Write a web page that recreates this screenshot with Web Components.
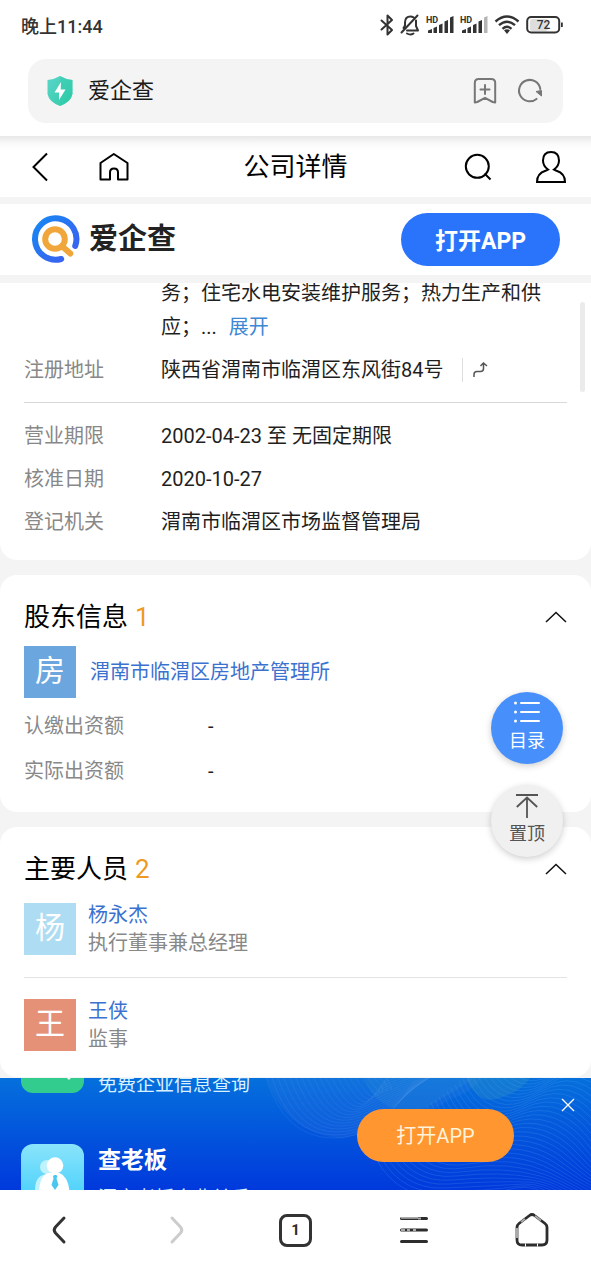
<!DOCTYPE html>
<html lang="zh-CN">
<head>
<meta charset="utf-8">
<meta name="viewport" content="width=device-width, initial-scale=1">
<title>公司详情</title>
<style>
  body { margin: 0; background: #f4f4f4; font-family: Roboto, "Noto Sans CJK SC", sans-serif; font-size: 20px; color: #1f1f1f; }
</style>
</head>
<body>
<company-page></company-page>

<script>
const ICONS = {
  bluetooth: [14, 22, '<path d="M1.5 6.500 12 16 7.500 20.500V1.500L12 6 1.500 15.500" fill="none" stroke="#333" stroke-width="2" stroke-linejoin="round" stroke-linecap="round"/>'],
  mute: [20, 22, '<g fill="none" stroke="#333" stroke-width="2" stroke-linecap="round" stroke-linejoin="round"><path d="M16 6.500V12l2 4.500H7M3.500 14 5 11.500V8.500C5 4.500 7.500 2.500 10.500 2.500q1.500 0 3 .8M1.500 18.500 17.500 1.500M7 19.500q3.500 2 6.500 0"/></g>'],
  signal: [28, 22, '<g fill="#333"><path d="M2 16.500 6 15v4H2zM7.500 14l3.500-1.500V19H7.500zM13 11l3.500-1.500V19H13zM18.500 7.500 22 6v13h-3.500z"/><path d="M24 3.500 27.500 2v17H24z"/></g><text x="0" y="9" font-family="Roboto" font-size="9" font-weight="700" fill="#333">HD</text>'],
  signalWeak: [28, 22, '<g fill="#333"><path d="M2 16.500 6 15v4H2zM7.500 14l3.500-1.500V19H7.500zM13 11l3.500-1.500V19H13zM18.500 7.500 22 6v13h-3.500z"/><path fill="#b5b5b5" d="M24 3.500 27.500 2v17H24z"/></g><text x="0" y="9" font-family="Roboto" font-size="9" font-weight="700" fill="#333">HD</text>'],
  wifi: [26, 22, '<g fill="none" stroke="#333" stroke-width="2.400"><path d="M1.500 7.500q11.500-10 23 0M5 11.200q8-7 16 0M8.500 14.800q4.500-4 9 0"/></g><path d="M10 16.300q3-2.300 6 0L13 20z" fill="#333"/>'],
  battery: [38, 20, '<rect x="4" y="4" width="18" height="12" rx="2" fill="#ddd"/><rect x="1.200" y="2" width="32" height="15.500" rx="4" fill="none" stroke="#333" stroke-width="2"/><path d="M35 7.500h1.800v4.500H35z" fill="#333"/><text x="17.500" y="14" text-anchor="middle" font-family="Roboto" font-size="12" font-weight="500" fill="#333">72</text>'],
  shield: [28, 32, '<defs><linearGradient id="g" x1="0" y1="0" x2="1" y2="1"><stop offset="0" stop-color="#5bd5ca"/><stop offset="1" stop-color="#2fcba4"/></linearGradient></defs><path d="M14 1q-6 3.500-12.500 4V19q1.500 8 12.500 12 11-4 12.500-12V5Q20 4.500 14 1z" fill="url(#g)"/><path d="M14 1v30q11-4 12.500-12V5Q20 4.500 14 1z" fill="#27c9a9" opacity=".3"/><path d="M15 7 8.500 17.500H13L13 25l6.500-10.500h-4.800z" fill="#fff"/>'],
  bookmark: [24, 28, '<g fill="none" stroke="#777" stroke-width="2" stroke-linejoin="round" stroke-linecap="round"><path d="M1.800 25.500V6q0-4 4-4h12.400q4 0 4 4v19.500l-2.500-.5-7.700-4.200L4.300 25zM12 8v9M7.500 12.500h9"/></g>'],
  reload: [26, 26, '<path d="M19.500 20.900A10.700 10.700 0 1 1 23.300 11" fill="none" stroke="#777" stroke-width="2" stroke-linecap="round"/><path d="m19 13.500 5.500-1v5.500z" fill="#777" stroke="#777" stroke-linejoin="round"/>'],
  back: [18, 30, '<path d="M16 1.500 2.500 15 16 28.500" fill="none" stroke="#000" stroke-width="2"/>'],
  house: [30, 30, '<path d="M1.500 27.500V11L14.800 2 28.500 11V27.500H19V20.500q0-4-4-4t-4 4V27.500z" fill="none" stroke="#000" stroke-width="2" stroke-linejoin="round"/>'],
  search: [28, 28, '<circle cx="13.300" cy="13.300" r="11.500" fill="none" stroke="#000" stroke-width="2"/><path d="m20.500 20.500 6 6" stroke="#000" stroke-width="2"/>'],
  user: [32, 34, '<path d="M2 32q0-8.500 8.500-11.200l2.500-1.300Q8 16 8 10.500 8 2 16 2t8 8.500q0 5.500-5 9l2.500 1.300Q30 23.500 30 32z" fill="none" stroke="#000" stroke-width="2"/>'],
  brand: [50, 50, '<defs><linearGradient id="b" x1="0" y1="0" x2="1" y2="1"><stop offset="0" stop-color="#1688f2"/><stop offset="1" stop-color="#3f5cf0"/></linearGradient></defs><path d="M30.200 44A20.700 20.700 0 1 1 44.200 31" fill="none" stroke="url(#b)" stroke-width="6" stroke-linecap="round"/><circle cx="24" cy="24" r="9.800" fill="none" stroke="#f0a63a" stroke-width="6"/><path d="m32 32 7.300 6.500" stroke="#f0a63a" stroke-width="6" stroke-linecap="round"/>'],
  route: [18, 18, '<path d="M2 16v-2.500q0-3 3-3h3.500q3 0 3-3V2.500M8.500 5l3-3L15 5" fill="none" stroke="#555" stroke-width="1.500"/>'],
  chevron: [22, 12, '<path d="M1 11 11 1.500 21 11" fill="none" stroke="#111" stroke-width="1.500"/>'],
  list: [28, 24, '<g stroke="#fff" stroke-width="2" stroke-linecap="round"><path d="M8 3h18M8 12h18M8 21h18"/></g><g fill="#fff"><circle cx="2.500" cy="3" r="1.500"/><circle cx="2.500" cy="12" r="1.500"/><circle cx="2.500" cy="21" r="1.500"/></g>'],
  top: [24, 26, '<path d="M1 2h22M12 25V4.500M1.800 14 12 4.500 22.200 14" fill="none" stroke="#555" stroke-width="1.800"/>'],
  close: [14, 14, '<path d="m1 1 12 12M13 1 1 13" stroke="#fff" stroke-width="1.300"/>'],
  boss: [63, 63, '<defs><linearGradient id="c" x1="0" y1="0" x2="0" y2="1"><stop offset="0" stop-color="#8ae4fb"/><stop offset="1" stop-color="#3fcdfb"/></linearGradient></defs><rect width="63" height="63" rx="12" fill="url(#c)"/><g fill="#c0f2fe"><circle cx="26" cy="23" r="7"/><path d="M14 46q0-15 12-16v16z"/></g><g fill="#fff"><circle cx="34" cy="21.500" r="8.300"/><path d="M17.500 56q0-25 10-27h11q10.500 4 10.500 27z"/></g><path d="m32 32 1.500-1h1.500l1.500 1-1 2.500 2 6.500-3.500 5-3.500-5 2-6.500z" fill="#4bc6ee"/>'],
  query: [63, 63, '<rect width="63" height="63" rx="12" fill="#32cd8e"/><circle cx="31" cy="26" r="14" fill="none" stroke="#fff" stroke-width="5"/><path d="m42 40 6 8" stroke="#fff" stroke-width="3" stroke-linecap="round"/>'],
  prev: [14, 28, '<path d="M12 2 3.500 11q-2.600 3 0 6L12 26" fill="none" stroke="#333" stroke-width="3" stroke-linecap="round"/>'],
  next: [14, 28, '<path d="m2 2 8.500 9q2.600 3 0 6L2 26" fill="none" stroke="#ccc" stroke-width="3" stroke-linecap="round"/>'],
  menu: [30, 28, '<g stroke="#2d2d2d" stroke-width="3" stroke-linecap="round"><path d="M2.500 2.500h25M2.500 14h25M2.500 25.500h25"/></g><g stroke="#aaa" stroke-width="1.800"><path d="M2 1.800h17M2 14h4M8 14h3M14 14h3M19 2.500h3"/></g>'],
  home: [34, 36, '<path d="M14.500 3.500q2.500-2 5 0l10.500 8q2 1.500 2 4V28q0 5-5 5H7q-5 0-5-5V15.500q0-2.500 2-4z" fill="none" stroke="#2d2d2d" stroke-width="2.800"/><g fill="none" stroke="#aaa" stroke-width="2"><path d="M2 26V16M6 10l4-3M20 4l6 4.500"/><path d="M10 33h1M22 33h1" stroke="#fff" stroke-width="3"/></g>']
};

function define(name, css, html, setup) {
  const template = document.createElement('template');
  template.innerHTML = `<style>*{box-sizing:border-box}button{font:inherit;color:inherit;border:0;background:none;padding:0;margin:0;cursor:pointer}a{text-decoration:none}h1,h2,p{margin:0;font-weight:400;font-size:inherit}${css}</style>${html}`;
  customElements.define(name, class extends HTMLElement {
    constructor() {
      super();
      this.attachShadow({ mode: 'open' }).append(template.content.cloneNode(true));
    }
    connectedCallback() { if (setup) setup(this, this.shadowRoot); }
  });
}

define('ui-icon', ':host{display:block;flex:none}svg{display:block;overflow:visible}', '', (el, root) => {
  const [w, h, body] = ICONS[el.getAttribute('name')];
  root.innerHTML += `<svg width="${w}" height="${h}" viewBox="0 0 ${w} ${h}" aria-hidden="true">${body}</svg>`;
});

define('status-bar', `
  :host{display:flex;align-items:center;justify-content:space-between;height:50px;padding:0 27px 0 21px;font-size:18px;font-weight:500;color:#333}
  .icons{display:flex;align-items:center;gap:6px}`,
  `<span>晚上11:44</span>
  <div class="icons"><ui-icon name="bluetooth"></ui-icon><ui-icon name="mute"></ui-icon><ui-icon name="signal"></ui-icon><ui-icon name="signalWeak"></ui-icon><ui-icon name="wifi"></ui-icon><ui-icon name="battery"></ui-icon></div>`);

define('address-bar', `
  :host{display:flex;align-items:center;height:64px;margin:9px 28px 13px;padding:0 20px 0 18px;background:#f4f4f4;border-radius:18px}
  span{flex:1;margin-left:14px;font-size:22px;line-height:32px;color:#1a1a1a}
  button+button{margin-left:20px}`,
  `<ui-icon name="shield"></ui-icon><span>爱企查</span>
  <button aria-label="收藏"><ui-icon name="bookmark"></ui-icon></button><button aria-label="刷新"><ui-icon name="reload"></ui-icon></button>`);

define('title-bar', `
  :host{display:grid;grid-template-columns:1fr auto 1fr;align-items:center;height:61px;padding:0 24px;background:linear-gradient(#e8e8e8,#fafafa 8px,#fff 14px);color:#000}
  h1{font-size:26px;line-height:36px}
  div{display:flex;align-items:center;gap:50px;padding-left:7px}
  .end{justify-content:flex-end;gap:43px}`,
  `<div><button aria-label="返回"><ui-icon name="back"></ui-icon></button><button aria-label="首页"><ui-icon name="house"></ui-icon></button></div>
  <h1>公司详情</h1>
  <div class="end"><button aria-label="搜索"><ui-icon name="search"></ui-icon></button><button aria-label="我的"><ui-icon name="user"></ui-icon></button></div>`);

define('brand-bar', `
  :host{display:flex;align-items:center;height:71px;margin:7px 0 8px;padding:0 31px;background:#fff}
  strong{flex:1;margin-left:8px;font-size:29px;line-height:40px;padding-bottom:2px;font-weight:700;color:#222}
  button{width:159px;height:53px;padding-bottom:2px;border-radius:27px;background:#2a74fb;color:#fff;font-size:23px;font-weight:700}`,
  `<ui-icon name="brand"></ui-icon><strong>爱企查</strong><button>打开APP</button>`);

define('info-row', `
  :host{display:grid;grid-template-columns:137px 1fr;line-height:34px}
  :host([wide]){grid-template-columns:184px 1fr}
  .label{color:#888}.value{display:flex;align-items:center}`,
  `<div class="label"></div><div class="value"><p><slot></slot></p><slot name="extra"></slot></div>`,
  (el, root) => { root.querySelector('.label').textContent = el.getAttribute('label'); });

define('section-title', `
  :host{display:flex;align-items:center;justify-content:space-between;line-height:36px;font-size:26px;color:#000}
  h2{display:flex;gap:7px}b{font-weight:400;color:#ee9a22}`,
  `<h2><slot></slot><b></b></h2><button aria-label="收起"><ui-icon name="chevron"></ui-icon></button>`,
  (el, root) => { root.querySelector('b').textContent = el.getAttribute('count'); });

define('party-item', `
  :host{display:flex;align-items:center;gap:12px;line-height:28px}
  .avatar{flex:none;width:52px;height:52px;background:var(--tile);color:#fff;font-size:30px;line-height:50px;text-align:center}
  a{display:block;color:#3b72cf}p{color:#888}
  :host([wide]){gap:14px}`,
  `<div class="avatar"></div><div><a href="#"></a><p><slot></slot></p></div>`,
  (el, root) => {
    const name = el.getAttribute('name');
    root.querySelector('.avatar').textContent = el.getAttribute('initial');
    root.querySelector('a').textContent = name;
  });

define('info-card', ':host{display:block;padding:24px;background:#fff;border-radius:17px}', '<slot></slot>');

define('float-tools', `
  :host{display:flex;flex-direction:column;gap:21px;font-size:18px}
  button{display:flex;flex-direction:column;align-items:center;width:72px;height:72px;padding-top:8px;border-radius:50%;background:#4790fc;color:#fff;line-height:28px;box-shadow:0 2px 7px #0003}
  button+button{background:#f0f0f0;color:#555}
  ui-icon{height:27px}`,
  `<button><ui-icon name="list"></ui-icon>目录</button><button><ui-icon name="top"></ui-icon>置顶</button>`);

define('company-details', `
  :host{display:block;position:relative;overflow:hidden}
  info-card+info-card{margin-top:15px}
  .first{margin-top:-7px;padding-top:0;padding-bottom:21px;border-radius:0 0 17px 17px}
  info-row+info-row{margin-top:9px}
  info-row.stake{margin-top:11px}
  .first a{margin-left:7px;color:#3d87d3}
  hr{height:1px;border:0;margin:20px 0 19px;background:#e3e3e3}
  .first hr{margin:15px 0 16px;background:#d9d9d9}
  .map{display:flex;margin-left:19px;padding:3px 9px;border-left:1px solid #ddd}
  .holder{margin-top:11px}.people{margin-top:14px}
  .thumb{position:absolute;top:19px;right:6px;width:5px;height:90px;border-radius:3px;background:#ebebeb}
  float-tools{position:absolute;top:409px;right:28px}`,
  `<info-card class="first">
    <info-row label="">务；住宅水电安装维护服务；热力生产和供应；... <a href="#">展开</a></info-row>
    <info-row label="注册地址">陕西省渭南市临渭区东风街84号<button slot="extra" class="map" aria-label="路线"><ui-icon name="route"></ui-icon></button></info-row>
    <hr>
    <info-row label="营业期限">2002-04-23 至 无固定期限</info-row>
    <info-row label="核准日期">2020-10-27</info-row>
    <info-row label="登记机关">渭南市临渭区市场监督管理局</info-row>
  </info-card>
  <info-card>
    <section-title count="1">股东信息</section-title>
    <party-item wide class="holder" name="渭南市临渭区房地产管理所" initial="房" style="--tile:#6ba7de"></party-item>
    <info-row wide class="stake" label="认缴出资额">-</info-row>
    <info-row wide class="stake" label="实际出资额">-</info-row>
  </info-card>
  <info-card>
    <section-title count="2">主要人员</section-title>
    <party-item class="people" name="杨永杰" initial="杨" style="--tile:#addcf3">执行董事兼总经理</party-item>
    <hr>
    <party-item name="王侠" initial="王" style="--tile:#e49178">监事</party-item>
  </info-card>
  <div class="thumb"></div>
  <float-tools></float-tools>`);

define('promo-item', `
  :host{display:flex;gap:14px;height:70px}
  strong{display:block;font-size:23px;line-height:34px;font-weight:700}
  p{margin-top:6px;font-size:19px;line-height:30px;color:#d8f1ff}`,
  `<slot name="icon"></slot><div><strong></strong><p><slot></slot></p></div>`,
  (el, root) => { root.querySelector('strong').textContent = el.getAttribute('name'); });

define('promo-banner', `
  :host{display:flex;position:relative;justify-content:space-between;height:112px;overflow:hidden;background:linear-gradient(#0570dc,#0039dc);color:#fff}
  .waves{position:absolute;top:0;right:0;width:335px;height:113px}
  .list{position:relative;display:flex;flex-direction:column;gap:44px;margin:-48px 0 0 21px}
  .open{position:relative;width:157px;height:53px;padding-bottom:2px;margin:31px 77px 0 0;border-radius:27px;background:#ff962f;color:#fff3d9;font-size:20px}
  .close{position:absolute;top:20px;right:16px}`,
  `<svg class="waves" viewBox="0 0 335 113" fill="none" aria-hidden="true"></svg>
  <div class="list">
    <promo-item name="爱企查"><ui-icon slot="icon" name="query"></ui-icon>免费企业信息查询</promo-item>
    <promo-item name="查老板"><ui-icon slot="icon" name="boss"></ui-icon>洞察老板企业关系</promo-item>
  </div>
  <button class="open">打开APP</button>
  <button class="close" aria-label="关闭"><ui-icon name="close"></ui-icon></button>`,
  (el, root) => {
    let paths = '<path d="M10 0q22 58 76 60 38-5 58-30 24 12 50-9 20-5 32-21z" fill="#4a82e8" opacity=".16"/><path d="M108 0q15 40 62 30 34-20 48-30z" fill="#3495d8" opacity=".2"/><path d="M210 0q12 28 34 20 20-6 30-20z" fill="#3fa5b8" opacity=".25"/>';
    for (let i = 0; i < 20; i++) {
      const x = 10 + i * 6;
      paths += `<path d="M${x} 0Q${x + 18} ${58 - i * 2} ${75 + i * 3} ${60 - i * 3}T${158 + i * 3} ${3 - i}" stroke="#6fa8f4" stroke-opacity=".14"/>`;
    }
    for (let i = 0; i < 34; i++) {
      const x = 130 + i * 4;
      paths += `<path d="M${x - 15} ${70 - i * 3}Q${x + 5} ${118 - i * 3} ${x + 50} ${118 - i * 4}T${x + 130} ${110 - i * 2}T${x + 220} ${170 - i * 3}" stroke="#65a8f5" stroke-opacity=".2"/>`;
    }
    root.querySelector('.waves').innerHTML = paths;
  });

define('bottom-bar', `
  :host{display:grid;grid-template-columns:repeat(5,1fr);height:90px;padding-bottom:10px;background:#fff;color:#2d2d2d}
  button{display:flex;align-items:center;justify-content:center}
  .tabs span{width:33px;height:33px;border:3px solid #333;border-radius:8px;font-size:15px;line-height:27px;font-weight:700}`,
  `<button aria-label="后退"><ui-icon name="prev"></ui-icon></button>
  <button aria-label="前进"><ui-icon name="next"></ui-icon></button>
  <button class="tabs"><span>1</span></button>
  <button aria-label="菜单"><ui-icon name="menu"></ui-icon></button>
  <button aria-label="主页"><ui-icon name="home"></ui-icon></button>`);

define('company-page', `
  :host{display:flex;flex-direction:column;height:100vh;overflow:hidden}
  header{display:flow-root;flex:none;background:#fff}
  title-bar,brand-bar,promo-banner,bottom-bar{flex:none}
  company-details{flex:1;min-height:0}`,
  `<header><status-bar></status-bar><address-bar></address-bar></header>
  <title-bar></title-bar><brand-bar></brand-bar>
  <company-details></company-details>
  <promo-banner></promo-banner><bottom-bar></bottom-bar>`);
</script>
</body>
</html>
